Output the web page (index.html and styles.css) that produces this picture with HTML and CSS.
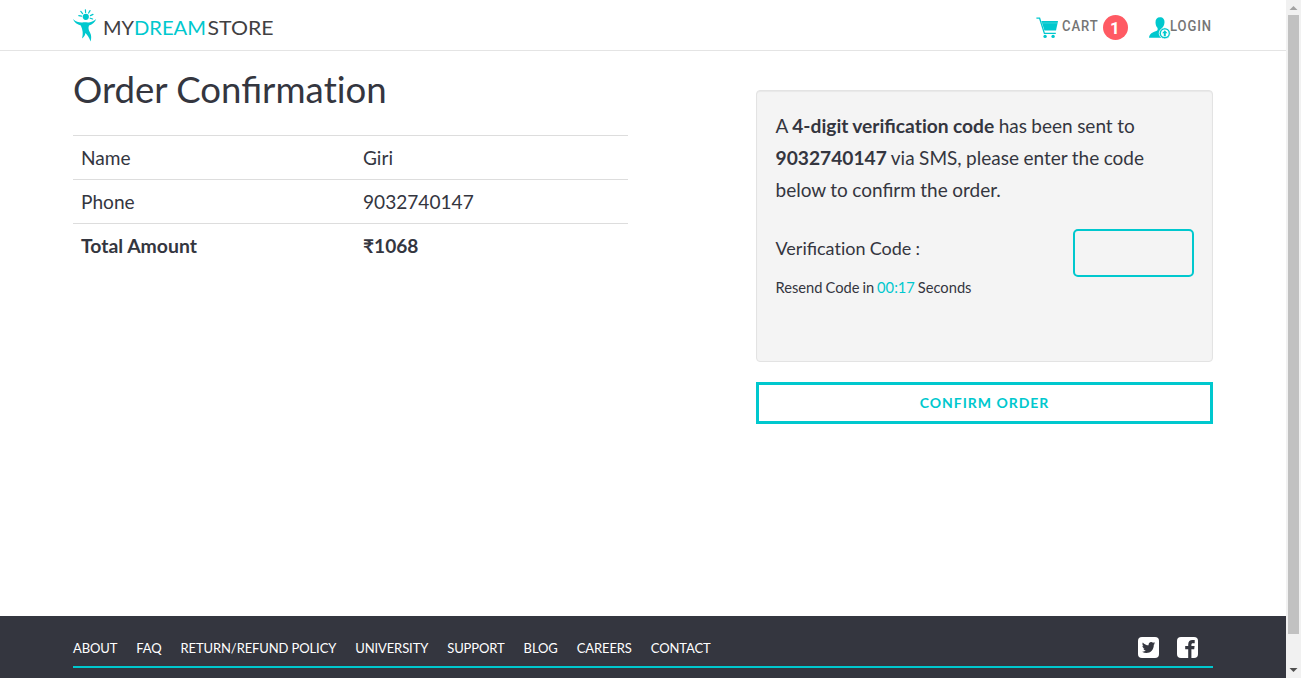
FILE: index.html
```html
<!DOCTYPE html>
<html lang="en">
<head>
<meta charset="utf-8">
<title>Order Confirmation</title>
<link rel="stylesheet" href="styles.css">
</head>
<body>
<div class="page">
  <header class="header">
    <div class="container header-row">
      <svg class="logo" width="202" height="36" viewBox="0 0 202 36">
        <g fill="#00c8ce">
          <circle cx="12.8" cy="9.8" r="3.1"/>
          <path d="M0 12C3 15 6.4 15.6 9.4 15.4C12 15 14 15.6 16 15.4C18.6 15 21 13.8 23.2 12C22 15.4 19.6 17.4 16 18.4C15 20.6 15.6 23 17 25.6C18.6 28.6 18.4 31.4 17.6 34.6C16.4 31 14.6 28.4 12.4 26C12 28.4 11.2 30 9 31.4C10.4 27 9.8 23 7.8 18.6C4.4 17.6 1 15.4 0 12Z"/>
        </g>
        <path d="M12.4 2.8L12.6 5.4M17 3.6L15.6 6M7.8 4.4L9.6 6.6M20 7.4L17.4 8.6M5.8 8.6L8.6 9.2M19.6 12L17.2 11.2" stroke="#00c8ce" stroke-width="1.2" stroke-linecap="round" fill="none"/>
        <g class="wordmark">
          <text x="30" y="27.5" textLength="31" lengthAdjust="spacingAndGlyphs">MY</text>
          <text class="accent" x="61" y="27.5" textLength="72" lengthAdjust="spacingAndGlyphs">DREAM</text>
          <text x="134.5" y="27.5" textLength="66" lengthAdjust="spacingAndGlyphs">STORE</text>
        </g>
      </svg>
      <nav class="account">
        <a class="cart">
          <svg width="23" height="22" viewBox="0 0 23 22">
            <path d="M.4 1.2H3.6L8.4 16.4H19.8" fill="none" stroke="#00c8ce" stroke-width="1.3"/>
            <path d="M5.4 4H22L20 13.4H8.4Z" fill="#00c8ce"/>
            <path d="M4.8 6H21.6" stroke="#5cdde1" stroke-width=".6"/>
            <circle cx="9.1" cy="19.4" r="1.7" fill="#00c8ce"/><circle cx="17.1" cy="19.4" r="1.7" fill="#00c8ce"/>
          </svg>
          <span class="label cart-label">CART</span>
          <span class="count">1</span>
        </a>
        <a class="login">
          <svg width="22" height="22" viewBox="0 0 22 22">
            <path d="M11 .2C14 .2 15.7 2.2 15.5 5.4C15.3 8.4 14 9.8 13.2 11V13C14 14.4 19.4 14.2 20 20.8H0C.2 15 7 15 8.6 13V11C7.4 9.6 6.6 8 6.5 5.4C6.4 2.2 8 .2 11 .2Z" fill="#00c8ce"/>
            <circle cx="15.8" cy="16.3" r="5.6" fill="#00c8ce" stroke="#fff" stroke-width=".8"/>
            <circle cx="15.8" cy="16.3" r="3.8" fill="#fff"/>
            <path d="M15.8 13.2L18.5 16.2H16.8V19.2H14.8V16.2H13.1Z" fill="#00c8ce"/>
          </svg>
          <span class="label">LOGIN</span>
        </a>
      </nav>
    </div>
  </header>

  <main class="container main">
    <section class="summary">
      <h1>Order Confirma<span class="plain">ti</span>on</h1>
      <dl class="details">
        <div class="row"><dt>Name</dt><dd>Giri</dd></div>
        <div class="row"><dt>Phone</dt><dd>9032740147</dd></div>
        <div class="row total"><dt>Total Amount</dt><dd>₹1068</dd></div>
      </dl>
    </section>
    <section class="verify">
      <div class="panel">
        <p class="message">A <b>4-digit verifica<span class="plain">ti</span>on code</b> has been sent to<br><b>9032740147</b> via SMS, please enter the code<br>below to confirm the order.</p>
        <div class="code-row">
          <label for="code">Verifica<span class="plain">ti</span>on Code :</label>
          <input id="code" class="code" type="text">
        </div>
        <p class="resend">Resend Code in <span>00:17</span> Seconds</p>
      </div>
      <button class="confirm">CONFIRM ORDER</button>
    </section>
  </main>

  <footer class="footer">
    <div class="container footer-row">
      <nav class="links"><a>ABOUT</a><a>FAQ</a><a>RETURN/REFUND POLICY</a><a>UNIVERSITY</a><a>SUPPORT</a><a>BLOG</a><a>CAREERS</a><a>CONTACT</a></nav>
      <div class="social">
        <svg width="21" height="21" viewBox="0 0 21 21">
          <rect width="21" height="21" rx="4" fill="#fff"/>
          <path d="M17.2 6.2C16.7 6.5 16.2 6.6 15.6 6.7C16.2 6.3 16.6 5.8 16.8 5.1C16.3 5.4 15.7 5.7 15 5.8C13.4 4 10.1 5.2 10.6 8.3C8.4 8.2 6.3 7.1 4.8 5.4C4.1 6.7 4.4 8.3 5.7 9.2C5.2 9.2 4.8 9 4.4 8.8C4.4 10.2 5.3 11.3 6.7 11.7H5.4C5.8 12.8 6.7 13.6 8 13.6C6.9 14.5 5.5 14.9 4 14.7C9.7 18.2 16 14.4 15.8 7.8C16.4 7.4 16.8 6.8 17.2 6.2Z" fill="#34363f"/>
        </svg>
        <svg width="21" height="21" viewBox="0 0 21 21">
          <rect width="21" height="21" rx="4" fill="#fff"/>
          <path d="M11.2 21V12.3H8.2V9.1H11.2V7.4C11.2 4.5 12.9 3.1 15.3 3.1H17.7V6.2H16C14.7 6.2 14.4 6.9 14.4 7.7V9.1H17.6L17.2 12.3H14.4V21Z" fill="#34363f"/>
        </svg>
      </div>
    </div>
  </footer>
</div>
<aside class="scrollbar" aria-hidden="true">
  <svg width="15" height="15"><path d="M3.5 10L7.5 6L11.5 10Z" fill="#a3a3a3"/></svg>
  <div class="thumb"></div>
  <svg class="down" width="15" height="15"><path d="M3.5 5L7.5 9L11.5 5Z" fill="#505050"/></svg>
</aside>
</body>
</html>
```

FILE: styles.css
```css
* { box-sizing: border-box; }
body { margin: 0; height: 678px; display: flex; overflow: hidden; background: #fff; color: #34363f; font-family: Lato, sans-serif; }
h1, p, dl, dd { margin: 0; }
.page { width: 1286px; height: 678px; display: flex; flex-direction: column; }
.container { width: 1140px; margin: 0 73px; }
.plain { font-variant-ligatures: none; }
.header { height: 51px; border-bottom: 1px solid #e4e4e4; }
.header-row { display: flex; justify-content: space-between; }
.logo { margin-top: 7px; }
.wordmark { font: 19px Lato, sans-serif; fill: #414042; }
.wordmark .accent { fill: #00c8ce; }
.account { display: flex; padding-right: 1px; font: 500 14.5px/20px Roboto, sans-serif; letter-spacing: 1px; color: #757575; }
.cart, .login { display: flex; align-items: flex-start; }
.cart svg { margin: 17px 3px 0 0; }
.label { width: 41px; padding-top: 17px; transform: scaleX(.9); transform-origin: left; }
.count { width: 25px; height: 25px; margin-top: 15px; border-radius: 50%; background: #ff5a63; color: #fff; font: 700 17px/26px Roboto, sans-serif; text-align: center; }
.login { margin-left: 21px; }
.login svg { margin: 17px -1px 0 0; }
.login .label { width: 42px; }
.main { flex: 1; display: flex; justify-content: space-between; }
.summary { width: 555px; padding-top: 16px; }
h1 { font-size: 36.6px; line-height: 44px; font-weight: 400; }
.details { margin-top: 24px; font-size: 19.1px; }
.row { height: 44px; display: flex; padding: 0 8px; border-top: 1px solid #ddd; line-height: 44px; }
.row dt { width: 282px; }
.total { font-weight: 700; }
.total dt { font-size: 19.4px; }
.verify { width: 457px; padding-top: 39px; }
.panel { height: 272px; padding: 19px 18px 0 18.5px; border: 1px solid #e3e3e3; border-radius: 4px; background: #f4f4f4; box-shadow: inset 0 1px 1px rgba(0, 0, 0, .05); }
.message { font-size: 19px; line-height: 32px; word-spacing: -.4px; white-space: nowrap; }
.message b { font-size: 19.2px; }
.code-row { display: flex; justify-content: space-between; margin-top: 23px; font-size: 18px; line-height: 38px; word-spacing: -.5px; }
.code { width: 121px; height: 48px; border: 2px solid #00c8ce; border-radius: 5px; background: transparent; }
.resend { font-size: 14.7px; line-height: 20px; word-spacing: -.8px; }
.resend span { color: #00c8ce; }
.confirm { display: block; width: 457px; height: 42px; margin-top: 20px; padding: 0 6px 2px; border: 3px solid #00c8ce; background: #fff; color: #00c8ce; font: 700 14px Lato, sans-serif; letter-spacing: .98px; }
.footer { height: 62px; background: #34363f; }
.footer-row { height: 52px; display: flex; justify-content: space-between; border-bottom: 2px solid #00c8ce; }
.links { display: flex; gap: 19px; padding-top: 22px; color: #fff; font-size: 13px; line-height: 20px; letter-spacing: -.11px; white-space: nowrap; }
.social { display: flex; gap: 18px; padding: 21px 15px 0 0; }
.scrollbar { width: 15px; height: 678px; display: flex; flex-direction: column; background: #f1f1f1; }
.thumb { width: 11px; height: 619px; margin-left: 2px; background: #c1c1c1; }
.down { margin-top: auto; }
```
